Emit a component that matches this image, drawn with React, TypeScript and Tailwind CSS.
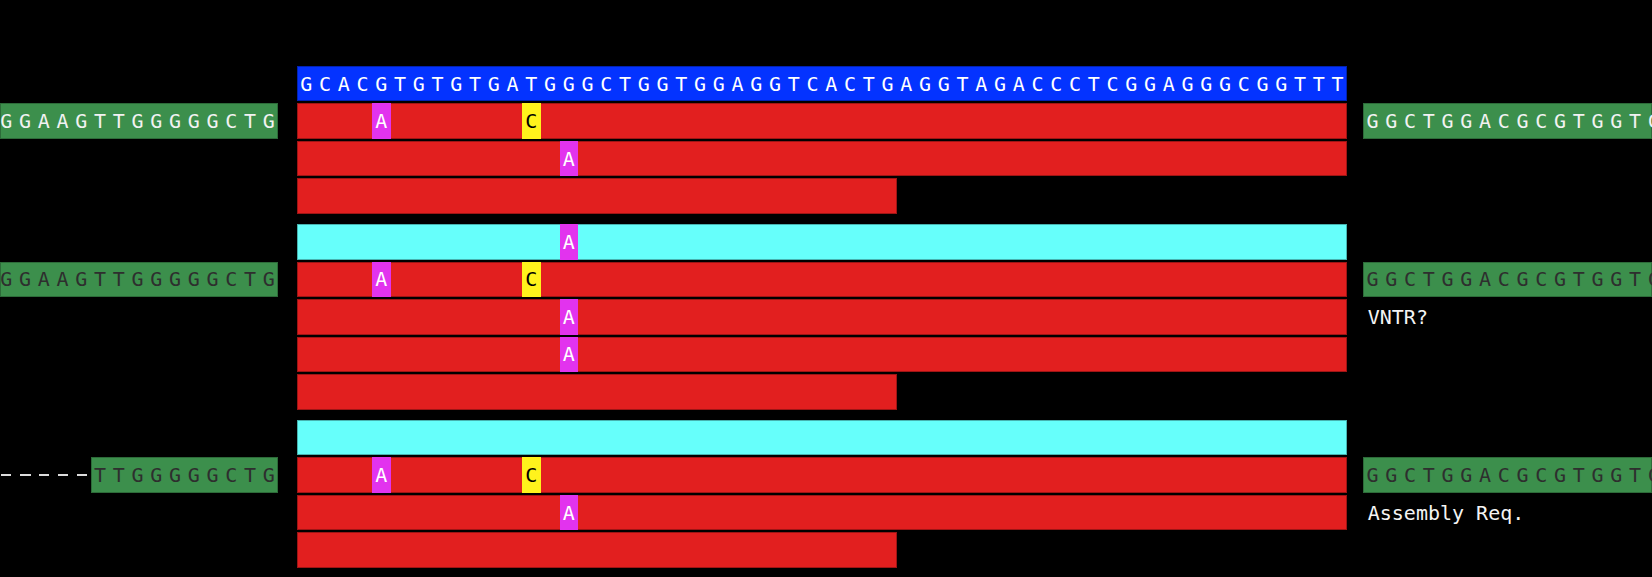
import React from "react";

const REF = "GCACGTGTGTGATGGGCTGGTGGAGGTCACTGAGGTAGACCCTCGGAGGGCGGTTT";
const LEFT_FLANK = "GGAAGTTGGGGGCTG";
const LEFT_SHORT = "TTGGGGGCTG";
const RIGHT_FLANK = "GGCTGGACGCGTGGTC";

type Kind = "ref" | "hap" | "read";

interface Row {
  kind: Kind;
  short?: boolean;
  snps?: Record<number, string>;
  flank?: "full" | "dashed";
  dark?: boolean;
  note?: string;
}

const SNP_AC = { 4: "A", 12: "C" };
const SNP_A = { 14: "A" };

const groups: Row[][] = [
  [
    { kind: "ref" },
    { kind: "read", snps: SNP_AC, flank: "full" },
    { kind: "read", snps: SNP_A },
    { kind: "read", short: true },
  ],
  [
    { kind: "hap", snps: SNP_A },
    { kind: "read", snps: SNP_AC, flank: "full", dark: true },
    { kind: "read", snps: SNP_A, note: "VNTR?" },
    { kind: "read", snps: SNP_A },
    { kind: "read", short: true },
  ],
  [
    { kind: "hap" },
    { kind: "read", snps: SNP_AC, flank: "dashed", dark: true },
    { kind: "read", snps: SNP_A, note: "Assembly Req." },
    { kind: "read", short: true },
  ],
];

const Cell = ({ ch, className = "" }: { ch?: string; className?: string }) => (
  <div
    className={`w-[18.75px] shrink-0 flex items-center justify-center leading-none ${className}`}
  >
    {ch}
  </div>
);

const SnpCell = ({ base }: { base: string }) => (
  <Cell
    ch={base}
    className={base === "C" ? "bg-[#fff31c] text-black" : "bg-[#e233ee] text-white"}
  />
);

const Bar = ({ row }: { row: Row }) => {
  const bg =
    row.kind === "ref"
      ? "bg-[#0433ff] text-white"
      : row.kind === "hap"
      ? "bg-[#66fffb]"
      : "bg-[#e21f1f]";
  const len = row.short ? 32 : REF.length;

  return (
    <div
      className={`flex h-full ${row.short ? "w-[600px]" : "w-[1050px]"} ${bg} shadow-[inset_0_0_0_1px_rgba(0,0,0,0.3)]`}
    >
      {Array.from({ length: len }, (_, i) => {
        const snp = row.snps?.[i];
        if (snp) return <SnpCell key={i} base={snp} />;
        return <Cell key={i} ch={row.kind === "ref" ? REF[i] : undefined} />;
      })}
    </div>
  );
};

const Flank = ({ seq, dark, align }: { seq: string; dark?: boolean; align: "start" | "end" }) => (
  <div
    className={`flex h-full overflow-hidden bg-[#3c8f4c] shadow-[inset_0_0_0_1px_rgba(0,0,0,0.25)] ${
      align === "end" ? "justify-end" : "justify-start"
    } ${dark ? "text-[#2e2e2e]" : "text-[#f2f2f2]"}`}
  >
    {seq.split("").map((c, i) => (
      <Cell key={i} ch={c} />
    ))}
  </div>
);

const ReadRow = ({ row }: { row: Row }) => (
  <div className="flex h-[35.5px]">
    <div className="w-[278.25px] mr-[18.75px] flex items-center">
      {row.flank === "full" && (
        <div className="flex-1 h-full min-w-0">
          <Flank seq={LEFT_FLANK} dark={row.dark} align="end" />
        </div>
      )}
      {row.flank === "dashed" && (
        <>
          <div className="flex-1 h-[2px] pr-[4px]">
            <div className="h-full bg-[repeating-linear-gradient(90deg,transparent_0_1px,#dcdcdc_1px_11.5px,transparent_11.5px_19px)]" />
          </div>
          <div className="h-full shrink-0">
            <Flank seq={LEFT_SHORT} dark={row.dark} align="end" />
          </div>
        </>
      )}
    </div>
    <div className="w-[1050px] shrink-0 flex">
      <Bar row={row} />
    </div>
    <div className="flex-1 min-w-0 ml-[16.25px] flex items-center">
      {row.flank && (
        <div className="flex-1 h-full min-w-0">
          <Flank seq={RIGHT_FLANK} dark={row.dark} align="start" />
        </div>
      )}
      {row.note && <span className="pl-[4.5px] text-[#f4f4f4] leading-none">{row.note}</span>}
    </div>
  </div>
);

export default function App() {
  return (
    <div className="w-[1652px] h-[577px] overflow-hidden bg-black pt-[65.75px] font-['DejaVu_Sans_Mono',monospace] text-[20px]">
      <div className="flex flex-col gap-[10.25px]">
        {groups.map((g, gi) => (
          <div key={gi} className="flex flex-col gap-[2px]">
            {g.map((row, ri) => (
              <ReadRow key={ri} row={row} />
            ))}
          </div>
        ))}
      </div>
    </div>
  );
}
